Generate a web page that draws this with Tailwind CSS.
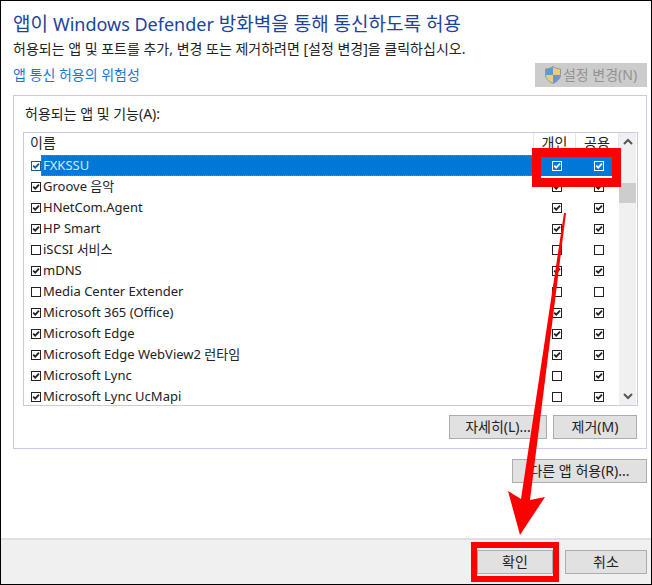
<!DOCTYPE html>
<html lang="ko">
<head>
  <meta charset="UTF-8">
  <meta name="viewport" content="width=device-width, initial-scale=1.0">
  <title>허용되는 앱</title>
  <script src="https://cdn.jsdelivr.net/npm/@tailwindcss/browser@4"></script>
  <style>
    body { font-family: 'Noto Sans', 'Noto Sans CJK KR', sans-serif; }
  </style>
</head>
<body class="min-h-screen bg-white text-[14px] leading-5 text-[#222]">
  <div class="relative flex min-h-screen flex-col border border-black">
    <main class="flex flex-1 flex-col pt-2 pr-1 pl-3">
      <h1 class="text-[19px] leading-[30px] text-[#1c449c]">앱이 <span class="text-[18px]">Windows Defender</span> 방화벽을 통해 통신하도록 허용</h1>
      <p>허용되는 앱 및 포트를 추가, 변경 또는 제거하려면 [설정 변경]을 클릭하십시오.</p>
      <div class="mt-1 flex items-center justify-between">
        <a href="#" class="text-[#1a78d2]">앱 통신 허용의 위험성</a>
        <button disabled class="flex h-6 w-28 items-center justify-center gap-0.5 bg-[#cccccc] text-[#929292]">
          <svg class="h-[18px] w-4 shrink-0" viewBox="0 0 16 18" aria-hidden="true">
            <path d="M8 .5C6 2 3.500 2.800.5 3v6H8z" fill="#5f9bd0"/>
            <path d="M8 .5c2 1.500 4.500 2.300 7.500 2.500v6H8z" fill="#ecca80"/>
            <path d="M.5 9H8v8.500C3.500 15.500.5 12.500.5 9z" fill="#ecca80"/>
            <path d="M15.500 9H8v8.500c4.500-2 7.500-5 7.500-8.500z" fill="#5f9bd0"/>
            <path d="M8 .5C6 2 3.500 2.800.5 3v5.500c0 4 3 7 7.500 9 4.500-2 7.500-5 7.500-9V3C12.500 2.800 10 2 8 .5z" fill="none" stroke="#8e979e"/>
          </svg>
          설정 변경(N)
        </button>
      </div>

      <section class="mt-2 border border-[#c8cae8] pt-2 pr-2 pb-[9px] pl-[9px]">
        <h2 id="list-title" class="pl-0.5">허용되는 앱 및 기능(A):</h2>
        <div class="mt-2 flex h-[274px] border border-[#c8cae8]">
          <div class="min-w-0 flex-1 overflow-hidden">
            <table class="w-full table-fixed text-[13px]" aria-labelledby="list-title">
              <thead>
                <tr class="h-[22px] text-[14px] leading-5">
                  <th class="p-0 pl-1.5 text-left align-top font-normal">이름</th>
                  <th class="w-[42px] border-l border-[#e5e5e5] p-0 align-top font-normal">개인</th>
                  <th class="w-[43px] border-x border-[#e5e5e5] p-0 align-top font-normal">공용</th>
                </tr>
              </thead>
              <tbody id="apps"></tbody>
            </table>
          </div>
          <div class="flex w-[17px] flex-col items-center bg-[#f0f0f0] text-[#555]">
            <svg class="my-1 h-2.5 w-2.5" viewBox="0 0 10 10" fill="none" stroke="currentColor" stroke-width="2"><path d="M1 7l4-4 4 4"/></svg>
            <div class="mt-8 h-5 w-full bg-[#cdcdcd]"></div>
            <svg class="mt-auto mb-1 h-2.5 w-2.5" viewBox="0 0 10 10" fill="none" stroke="currentColor" stroke-width="2"><path d="M1 3l4 4 4-4"/></svg>
          </div>
          <div class="w-px"></div>
        </div>
        <div class="mt-[9px] flex justify-end gap-1.5 pr-px">
          <button class="h-6 w-[98px] border border-[#adadad] bg-[#e1e1e1]">자세히(L)...</button>
          <button class="h-6 w-[84px] border border-[#adadad] bg-[#e1e1e1]">제거(M)</button>
        </div>
      </section>
      <button class="mt-2.5 h-6 w-[135px] self-end border border-[#adadad] bg-[#e1e1e1]">다른 앱 허용(R)...</button>
    </main>

    <footer class="flex h-[46px] items-center justify-end gap-1.5 border-t-2 border-[#dfdfdf] bg-[#f0f0f0] pr-1">
      <div class="border-6 border-[#fe0000]">
        <button class="my-0.5 block h-6 w-[76px] border border-[#adadad] bg-[#e1e1e1]">확인</button>
      </div>
      <button class="h-6 w-[82px] border border-[#adadad] bg-[#e1e1e1]">취소</button>
    </footer>

    <!-- highlight and arrow drawn over the dialog -->
    <div class="pointer-events-none absolute top-[147px] right-[30px] h-[39px] w-[89px] border-9 border-[#fe0000]"></div>
    <svg class="pointer-events-none absolute top-[212px] right-[83px] h-[322px] w-[60px]" viewBox="0 0 60 322" aria-hidden="true">
      <path d="M56 0h2L22 287l15-3-25 38L0 278l13 8z" fill="#fe0000"/>
    </svg>
  </div>

  <script>
    // home = 개인 column, pub = 공용 column
    const apps = [
      { name: 'FXKSSU', on: true, home: true, pub: true, selected: true },
      { name: 'Groove 음악', on: true, home: true, pub: true },
      { name: 'HNetCom.Agent', on: true, home: true, pub: true },
      { name: 'HP Smart', on: true, home: true, pub: true },
      { name: 'iSCSI 서비스', on: false, home: false, pub: false },
      { name: 'mDNS', on: true, home: true, pub: true },
      { name: 'Media Center Extender', on: false, home: false, pub: false },
      { name: 'Microsoft 365 (Office)', on: true, home: true, pub: true },
      { name: 'Microsoft Edge', on: true, home: true, pub: true },
      { name: 'Microsoft Edge WebView2 런타임', on: true, home: true, pub: true },
      { name: 'Microsoft Lync', on: true, home: false, pub: true },
      { name: 'Microsoft Lync UcMapi', on: true, home: false, pub: true }
    ];

    function checkbox(checked, color, label) {
      return `
        <span class="grid size-2.5 shrink-0 ${color}">
          <input type="checkbox" ${checked ? 'checked' : ''} ${label} class="peer col-start-1 row-start-1 size-2.5 appearance-none border border-current">
          <svg class="pointer-events-none invisible col-start-1 row-start-1 size-2.5 peer-checked:visible" viewBox="0 0 10 10" fill="none" stroke="currentColor" stroke-width="1.8"><path d="M2.200 4.700l2 2L8 2.700"/></svg>
        </span>`;
    }

    document.getElementById('apps').innerHTML = apps.map(app => {
      const fill = app.selected ? 'bg-[#0078d7]' : '';
      const tick = app.selected ? 'text-white' : 'text-[#222]';
      return `
        <tr class="h-[21px]">
          <td class="p-0">
            <label class="flex h-[21px] items-center pl-[7px]">
              ${checkbox(app.on, app.selected ? 'text-[#1c5a94]' : 'text-[#222]', '')}
              <span class="flex-1 pl-px ${app.selected ? 'border border-dotted border-[#a07858] bg-[#0078d7] text-[#d5eafc]' : 'border border-transparent'} leading-[19px] whitespace-nowrap">${app.name}</span>
            </label>
          </td>
          <td class="p-0 pl-[18px] ${fill}">${checkbox(app.home, tick, `aria-label="${app.name} 개인"`)}</td>
          <td class="p-0 pl-[18px] ${fill}">${checkbox(app.pub, tick, `aria-label="${app.name} 공용"`)}</td>
        </tr>`;
    }).join('');
  </script>
</body>
</html>
